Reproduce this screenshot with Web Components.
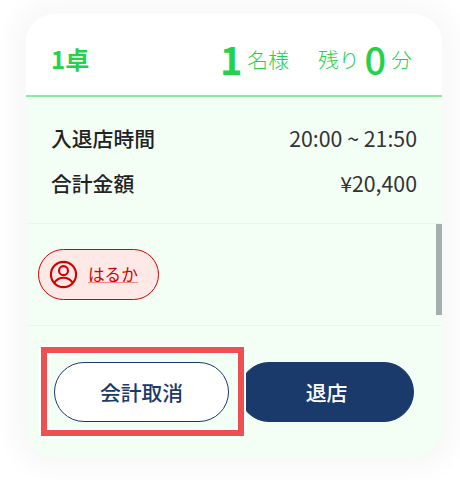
<!DOCTYPE html>
<html lang="ja">
<head>
<meta charset="utf-8">
<style>
html, body { margin: 0; padding: 0; background: #fff; }
body { width: 460px; height: 480px; overflow: hidden; font-family: "Noto Sans CJK JP", "Noto Sans", sans-serif; }
</style>
</head>
<body>
<order-card>
    <span slot="table">1卓</span>
    <head-count slot="status" num="1" after="名様" heavy></head-count>
    <head-count slot="status" before="残り" num="0" after="分"></head-count>

    <info-row label="入退店時間" value="20:00 ~ 21:50"></info-row>
    <info-row label="合計金額" value="¥20,400"></info-row>

    <guest-chip slot="guests">はるか</guest-chip>

    <action-button slot="actions" kind="outline" marked>会計取消</action-button>
    <action-button slot="actions" kind="solid">退店</action-button>
</order-card>

<script>
class orderCard extends HTMLElement {
    constructor() {
        super()
        this.attachShadow({mode: "open"})
    }

    connectedCallback() {
        this.shadowRoot.innerHTML = `
            <style>
            :host {
                display: block;
                width: 460px;
                height: 480px;
                box-sizing: border-box;
                padding: 14px 18px 23px 26px;
            }
            .card {
                position: relative;
                display: flex;
                flex-direction: column;
                height: 100%;
                border-radius: 28px;
                background: #f3fef5;
                box-shadow: 0 0 26px 14px #f8f8f8;
            }
            header {
                display: flex;
                justify-content: space-between;
                align-items: center;
                height: 83px;
                box-sizing: border-box;
                padding: 8px 30px 0 25px;
                background: #fff;
                border-radius: 28px 28px 0 0;
                border-bottom: 2px solid #8ce99e;
                color: #24d24a;
            }
            .table {
                font-size: 24px;
                font-weight: 700;
            }
            .status {
                display: flex;
                align-items: center;
                gap: 29px;
            }
            .times {
                height: 127px;
                box-sizing: border-box;
                padding: 22px 25px 0;
                display: flex;
                flex-direction: column;
                gap: 7px;
                border-bottom: 1px solid #ecf5ee;
            }
            .guests {
                height: 102px;
                box-sizing: border-box;
                padding: 25px 12px 0;
                border-bottom: 1px solid #ecf5ee;
            }
            .actions {
                display: flex;
                gap: 10px;
                padding: 36px 28px 0;
            }
            .thumb {
                position: absolute;
                right: 0;
                top: 210px;
                width: 6px;
                height: 91px;
                background: #a5afad;
            }
            </style>
            <div class="card">
                <header>
                    <div class="table"><slot name="table"></slot></div>
                    <div class="status"><slot name="status"></slot></div>
                </header>
                <div class="times"><slot></slot></div>
                <div class="guests"><slot name="guests"></slot></div>
                <div class="actions"><slot name="actions"></slot></div>
                <div class="thumb"></div>
            </div>
        `
    }
}

class headCount extends HTMLElement {
    constructor() {
        super()
        this.attachShadow({mode: "open"})
    }

    connectedCallback() {
        const before = this.getAttribute('before')
        const after = this.getAttribute('after')
        this.shadowRoot.innerHTML = `
            <style>
            :host {
                display: flex;
                align-items: center;
                gap: 5px;
                font-size: 20.8px;
                font-weight: 300;
                line-height: 40px;
                color: #24d24a;
            }
            b {
                font-size: 38px;
                font-weight: ${this.hasAttribute('heavy') ? 700 : 500};
            }
            </style>
            ${before ? `<span>${before}</span>` : ''}
            <b>${this.getAttribute('num')}</b>
            <span>${after}</span>
        `
    }
}

class infoRow extends HTMLElement {
    constructor() {
        super()
        this.attachShadow({mode: "open"})
    }

    connectedCallback() {
        this.shadowRoot.innerHTML = `
            <style>
            :host {
                display: flex;
                justify-content: space-between;
                align-items: center;
                font-size: 20.8px;
                line-height: 38px;
                color: #222;
            }
            .label {
                font-weight: 500;
            }
            .value {
                font-weight: 400;
                font-size: 21.3px;
                color: #333;
            }
            </style>
            <span class="label">${this.getAttribute('label')}</span>
            <span class="value">${this.getAttribute('value')}</span>
        `
    }
}

class guestChip extends HTMLElement {
    constructor() {
        super()
        this.attachShadow({mode: "open"})
    }

    connectedCallback() {
        this.shadowRoot.innerHTML = `
            <style>
            :host {
                display: inline-flex;
                align-items: center;
                gap: 10px;
                height: 51px;
                box-sizing: border-box;
                padding: 0 20px 0 10px;
                border: 1px solid #d40000;
                border-radius: 26px;
                background: #fee9e6;
                color: #d40000;
                font-size: 16.64px;
                font-weight: 400;
            }
            svg {
                width: 29px;
                height: 29px;
            }
            u {
                text-decoration-color: #ee8a8a;
                text-underline-offset: 1px;
                margin-top: -2px;
            }
            </style>
            <svg viewBox="0 0 30 30" fill="none" stroke="#d40000" stroke-width="2.2">
                <circle cx="15" cy="15" r="13"/>
                <circle cx="15" cy="11" r="4.6"/>
                <path d="M5.5 23.500c2.500-3.600 5.800-5.200 9.500-5.200s7 1.600 9.500 5.200"/>
            </svg>
            <u><slot></slot></u>
        `
    }
}

class actionButton extends HTMLElement {
    constructor() {
        super()
        this.attachShadow({mode: "open"})
    }

    connectedCallback() {
        const solid = this.getAttribute('kind') === 'solid'
        this.shadowRoot.innerHTML = `
            <style>
            :host {
                position: relative;
                display: flex;
                justify-content: center;
                align-items: center;
                width: 175.5px;
                height: 60px;
                box-sizing: border-box;
                border-radius: 30px;
                border: 1px solid #1a3a6b;
                background: ${solid ? '#1a3a6b' : '#fff'};
                color: ${solid ? '#fff' : '#1a3a6b'};
                font-size: 20.8px;
                font-weight: 500;
            }
            .mark {
                position: absolute;
                z-index: 2;
                left: -14px;
                top: -16px;
                width: 203px;
                height: 89px;
                box-sizing: border-box;
                border: 6px solid #ee5050;
                box-shadow: 0 0 0 2px #fff, inset 0 0 0 1.5px #fff;
            }
            </style>
            <slot></slot>
            ${this.hasAttribute('marked') ? '<div class="mark"></div>' : ''}
        `
    }
}

window.customElements.define('order-card', orderCard)
window.customElements.define('head-count', headCount)
window.customElements.define('info-row', infoRow)
window.customElements.define('guest-chip', guestChip)
window.customElements.define('action-button', actionButton)
</script>
</body>
</html>
